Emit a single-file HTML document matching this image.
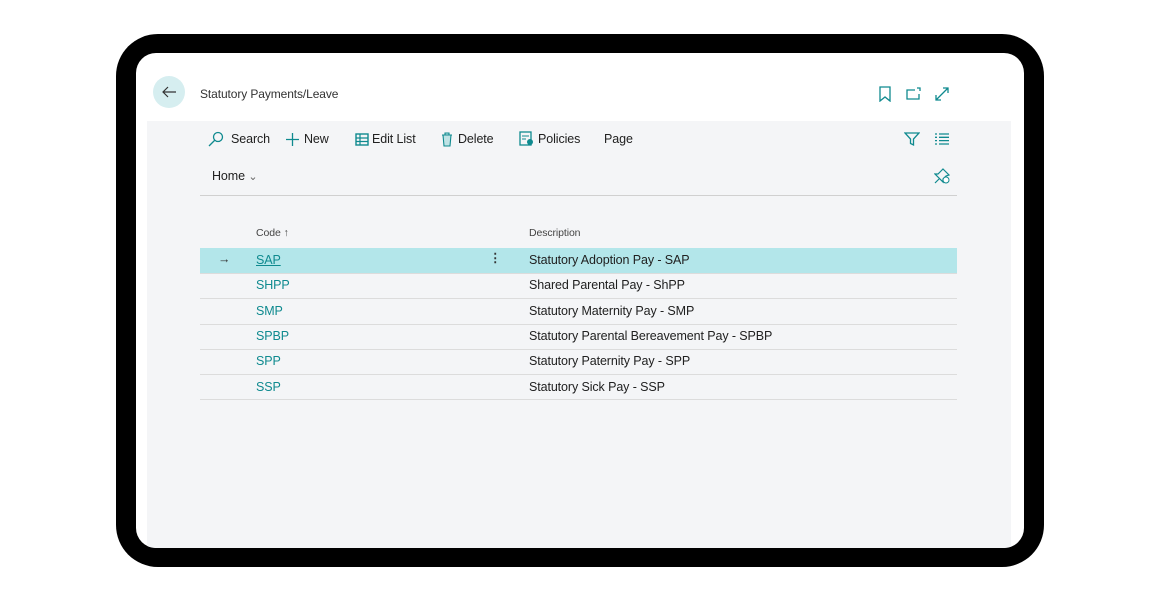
<!DOCTYPE html>
<html><head><style>
body{margin:0;width:1160px;height:600px;background:#fff;position:relative;font-family:"Segoe UI","Liberation Sans",sans-serif;overflow:hidden}
.frame{position:absolute;left:116px;top:34px;width:928px;height:533px;background:#000;border-radius:42px}
.screen{position:absolute;left:136px;top:53px;width:888px;height:495px;background:#fff;border-radius:20px;overflow:hidden}
.gray{position:absolute;left:11px;top:68px;width:864px;height:427px;background:#f4f5f7}
.t{position:absolute;font-size:12.5px;color:#212121;white-space:nowrap;letter-spacing:-0.1px}
.teal{color:#0f8a8f}
.line{position:absolute;left:64px;width:757px;height:1px;background:#dcdcdc}
svg{position:absolute}
</style></head><body>
<div class="frame"></div>
<div class="screen">
<div class="gray"></div>
<div style="position:absolute;left:17px;top:23px;width:32px;height:32px;border-radius:50%;background:#d6eef0"></div>
<svg style="left:25px;top:31px" width="16" height="16" viewBox="0 0 16 16"><path d="M15 8H2M7 3L2 8l5 5" fill="none" stroke="#333" stroke-width="1.2"/></svg>
<div class="t" style="left:64px;top:34px;font-size:12px;color:#333">Statutory Payments/Leave</div>
<svg style="left:742px;top:33px" width="14" height="16" viewBox="0 0 14 16"><path d="M2 1h10v14l-5-4-5 4z" fill="none" stroke="#0f8a8f" stroke-width="1.3"/></svg>
<svg style="left:770px;top:33px" width="16" height="16" viewBox="0 0 16 16"><path d="M9 4H1v9h12V8M11 2h3v3" fill="none" stroke="#0f8a8f" stroke-width="1.3"/></svg>
<svg style="left:798px;top:33px" width="16" height="16" viewBox="0 0 16 16"><path d="M2 14L14 2M9 2h5v5M2 9v5h5" fill="none" stroke="#0f8a8f" stroke-width="1.3"/></svg>
<svg style="left:72px;top:78px" width="16" height="16" viewBox="0 0 16 16"><circle cx="10" cy="6" r="4.5" fill="none" stroke="#0f8a8f" stroke-width="1.3"/><path d="M7 9L1 15" stroke="#0f8a8f" stroke-width="1.3"/></svg>
<div class="t" style="left:95px;top:79px">Search</div>
<svg style="left:149px;top:79px" width="15" height="15" viewBox="0 0 15 15"><path d="M7.5 1v13M1 7.5h13" stroke="#0f8a8f" stroke-width="1.3"/></svg>
<div class="t" style="left:168px;top:79px">New</div>
<svg style="left:219px;top:80px" width="14" height="13" viewBox="0 0 14 13"><rect x="1" y="1" width="12" height="11" fill="none" stroke="#0f8a8f" stroke-width="1.4"/><path d="M1 5h12M1 8.5h12M5 1v11" stroke="#0f8a8f" stroke-width="1.2"/></svg>
<div class="t" style="left:236px;top:79px">Edit List</div>
<svg style="left:305px;top:79px" width="12" height="15" viewBox="0 0 12 15"><path d="M1 3h10M4 3V1h4v2M2 3l1 11h6l1-11" fill="#bfe3e5" stroke="#0f8a8f" stroke-width="1.1"/></svg>
<div class="t" style="left:322px;top:79px">Delete</div>
<svg style="left:383px;top:78px" width="15" height="15" viewBox="0 0 15 15"><rect x="1" y="1" width="11" height="13" fill="none" stroke="#0f8a8f" stroke-width="1.3"/><path d="M3 5h7M3 8h4" stroke="#0f8a8f"/><circle cx="11" cy="11" r="3" fill="#0f8a8f"/></svg>
<div class="t" style="left:402px;top:79px">Policies</div>
<div class="t" style="left:468px;top:79px">Page</div>
<svg style="left:768px;top:78px" width="16" height="16" viewBox="0 0 16 16"><path d="M1 2h14l-5.5 6v6l-3-1.5V8z" fill="none" stroke="#0f8a8f" stroke-width="1.3"/></svg>
<svg style="left:799px;top:80px" width="14" height="12" viewBox="0 0 14 12"><path d="M0 1h2M4 1h10M0 4.3h2M4 4.3h10M0 7.6h2M4 7.6h10M0 11h2M4 11h10" stroke="#0f8a8f" stroke-width="1.3"/></svg>
<div class="t" style="left:76px;top:116px">Home <span style="font-size:11px;color:#666">&#8964;</span></div>
<svg style="left:798px;top:115px" width="16" height="16" viewBox="0 0 16 16"><path d="M9 1l6 6-3 1-3 3 0 3-8-8 3 0 3-3z M5 11l-4 4" fill="none" stroke="#0f8a8f" stroke-width="1.2"/><circle cx="12" cy="12" r="3" fill="#fff" stroke="#0f8a8f"/></svg>
<div class="line" style="top:142px;background:#d0d0d0"></div>
<div class="t" style="left:120px;top:174px;font-size:10.5px;color:#444">Code &#8593;</div>
<div class="t" style="left:393px;top:174px;font-size:10.5px;color:#444">Description</div>
<div style="position:absolute;left:64px;top:195px;width:757px;height:25px;background:#b3e6ea"></div>
<div class="t" style="left:82px;top:199px;color:#333">&#8594;</div>
<div class="t" style="left:353px;top:197px;color:#333;font-weight:bold">&#8942;</div>
<div class="t teal" style="left:120px;top:200px;text-decoration:underline">SAP</div>
<div class="t" style="left:393px;top:200px">Statutory Adoption Pay - SAP</div>
<div class="line" style="top:220px"></div>
<div class="t teal" style="left:120px;top:225px">SHPP</div><div class="t" style="left:393px;top:225px">Shared Parental Pay - ShPP</div>
<div class="line" style="top:245px"></div>
<div class="t teal" style="left:120px;top:251px">SMP</div><div class="t" style="left:393px;top:251px">Statutory Maternity Pay - SMP</div>
<div class="line" style="top:271px"></div>
<div class="t teal" style="left:120px;top:276px">SPBP</div><div class="t" style="left:393px;top:276px">Statutory Parental Bereavement Pay - SPBP</div>
<div class="line" style="top:296px"></div>
<div class="t teal" style="left:120px;top:301px">SPP</div><div class="t" style="left:393px;top:301px">Statutory Paternity Pay - SPP</div>
<div class="line" style="top:321px"></div>
<div class="t teal" style="left:120px;top:327px">SSP</div><div class="t" style="left:393px;top:327px">Statutory Sick Pay - SSP</div>
<div class="line" style="top:346px"></div>
</div>
</body></html>
